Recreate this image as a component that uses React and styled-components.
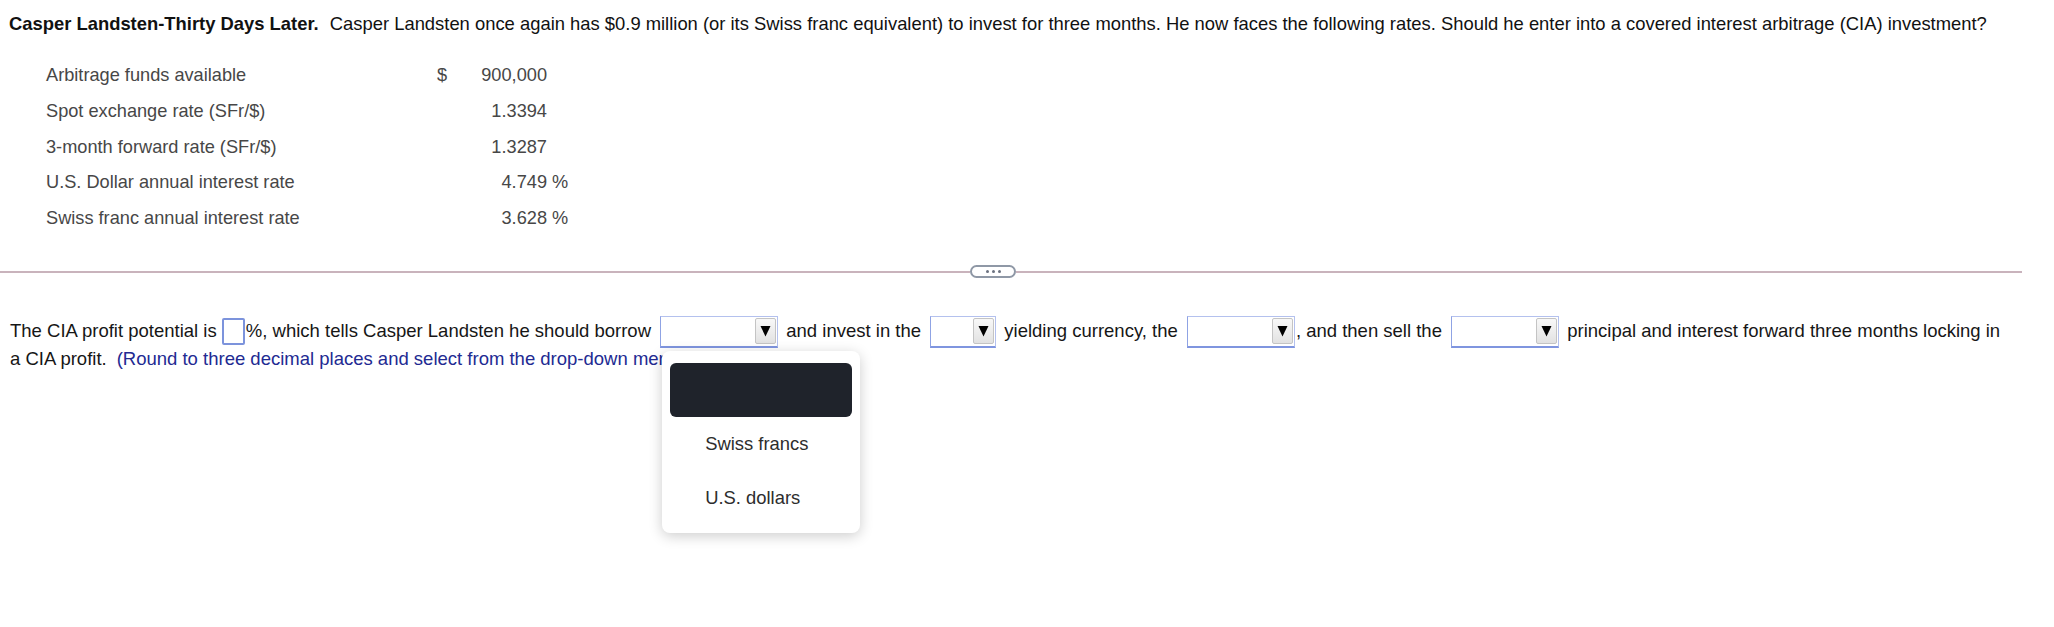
import React from 'react';
import styled, { createGlobalStyle } from 'styled-components';

const GlobalStyle = createGlobalStyle`
  html, body {
    margin: 0;
    padding: 0;
    background: #ffffff;
  }
  body {
    font-family: "Liberation Sans", Arial, Helvetica, sans-serif;
    color: #151515;
  }
`;

const Page = styled.div`
  width: 2054px;
  height: 627px;
  overflow: hidden;
  padding-top: 13px;
  box-sizing: border-box;
`;

const Intro = styled.p`
  margin: 0;
  padding-left: 9px;
  font-size: 18.4px;
  line-height: 22px;
  white-space: nowrap;
  color: #111;
`;

const Title = styled.b`
  font-weight: 700;
  margin-right: 6px;
`;

const Table = styled.div`
  display: grid;
  grid-template-columns: 391px 20px 90px auto;
  grid-auto-rows: 35.7px;
  align-items: center;
  margin: 23px 0 0 46px;
  font-size: 18.2px;
  color: #474747;
`;

const Label = styled.div``;

const Sign = styled.div``;

const Value = styled.div`
  text-align: right;
`;

const Suffix = styled.div`
  white-space: pre;
`;

const Divider = styled.div`
  display: flex;
  align-items: center;
  height: 13px;
  width: 2022px;
  margin-top: 29px;
`;

const Rule = styled.div`
  height: 2px;
  background: #c9b3bc;
  flex: ${(p) => (p.$fixed ? `0 0 ${p.$fixed}px` : '1')};
`;

const Handle = styled.div`
  width: 42px;
  height: 9px;
  border: 2px solid #8f98a6;
  border-radius: 7px;
  background: #fff;
  display: flex;
  align-items: center;
  justify-content: center;
  gap: 3px;
`;

const Dot = styled.span`
  width: 3px;
  height: 3px;
  border-radius: 50%;
  background: #6b7280;
`;

const Question = styled.p`
  margin: 40px 0 0 0;
  padding-left: 10px;
  font-size: 18.5px;
  line-height: 26px;
  color: #161616;
  white-space: nowrap;
`;

const Blank = styled.span`
  display: inline-block;
  vertical-align: middle;
  width: 19px;
  height: 23px;
  margin: -3px 1px 0 0;
  border: 2px solid #7c93dc;
  border-radius: 2px;
  background: #fff;
`;

const DropWrap = styled.span`
  position: relative;
  display: inline-block;
  vertical-align: middle;
  margin: -4px ${(p) => (p.$right != null ? p.$right : 3)}px -2px 4px;
`;

const Drop = styled.span`
  display: flex;
  justify-content: flex-end;
  align-items: stretch;
  box-sizing: border-box;
  width: ${(p) => p.$w}px;
  height: 32px;
  padding: 1px 1px 2px 0;
  border: 1px solid #b4c1ee;
  border-bottom: 2px solid #7f95df;
  border-left: 1px solid #8fa3e4;
  background: #fff;
`;

const Arrow = styled.span`
  width: 19px;
  display: flex;
  align-items: center;
  justify-content: center;
  background: linear-gradient(#f8f8f8, #e2e2e2);
  border: 1px solid #c4c4c4;
  border-radius: 2px;
`;

const Hint = styled.span`
  color: #222a92;
  margin-left: 10px;
`;

const Menu = styled.div`
  position: absolute;
  top: calc(100% + 3px);
  left: 2px;
  z-index: 10;
  width: 198px;
  box-sizing: border-box;
  padding: 12px 8px 8px;
  background: #fff;
  border-radius: 8px;
  box-shadow: 0 3px 14px rgba(0, 0, 0, 0.2);
`;

const Option = styled.div`
  height: 54px;
  display: flex;
  align-items: center;
  padding-left: 35px;
  font-size: 18.4px;
  color: #2d2d2d;
  border-radius: 6px;
  background: ${(p) => (p.$active ? '#1f232b' : 'transparent')};
`;

const rows = [
  { label: 'Arbitrage funds available', sign: '$', value: '900,000', suffix: '' },
  { label: 'Spot exchange rate (SFr/$)', sign: '', value: '1.3394', suffix: '' },
  { label: '3-month forward rate (SFr/$)', sign: '', value: '1.3287', suffix: '' },
  { label: 'U.S. Dollar annual interest rate', sign: '', value: '4.749', suffix: ' %' },
  { label: 'Swiss franc annual interest rate', sign: '', value: '3.628', suffix: ' %' },
];

const Select = ({ width, open, right }) => (
  <DropWrap $right={right}>
    <Drop $w={width}>
      <Arrow>
        <svg width="11" height="12" viewBox="0 0 11 12">
          <polygon points="0.5,1 10.5,1 5.5,11.5" fill="#000" />
        </svg>
      </Arrow>
    </Drop>
    {open && (
      <Menu>
        <Option $active />
        <Option>Swiss francs</Option>
        <Option>U.S. dollars</Option>
      </Menu>
    )}
  </DropWrap>
);

const App = () => {
  return (
    <>
      <GlobalStyle />
      <Page>
        <Intro>
          <Title>Casper Landsten-Thirty Days Later.</Title> Casper Landsten once again has $0.9
          million (or its Swiss franc equivalent) to invest for three months. He now faces the
          following rates. Should he enter into a covered interest arbitrage (CIA) investment?
        </Intro>

        <Table>
          {rows.map((r) => (
            <React.Fragment key={r.label}>
              <Label>{r.label}</Label>
              <Sign>{r.sign}</Sign>
              <Value>{r.value}</Value>
              <Suffix>{r.suffix}</Suffix>
            </React.Fragment>
          ))}
        </Table>

        <Divider>
          <Rule $fixed={970} />
          <Handle>
            <Dot />
            <Dot />
            <Dot />
          </Handle>
          <Rule />
        </Divider>

        <Question>
          The CIA profit potential is{' '}
          <Blank />
          %, which tells Casper Landsten he should borrow{' '}
          <Select width={118} open />{' '}
          and invest in the{' '}
          <Select width={66} />{' '}
          yielding currency, the{' '}
          <Select width={108} right={1} />
          , and then sell the{' '}
          <Select width={108} />{' '}
          principal and interest forward three months locking in
          <br />
          a CIA profit.
          <Hint>(Round to three decimal places and select from the drop-down menus.)</Hint>
        </Question>
      </Page>
    </>
  );
};

export default App;
